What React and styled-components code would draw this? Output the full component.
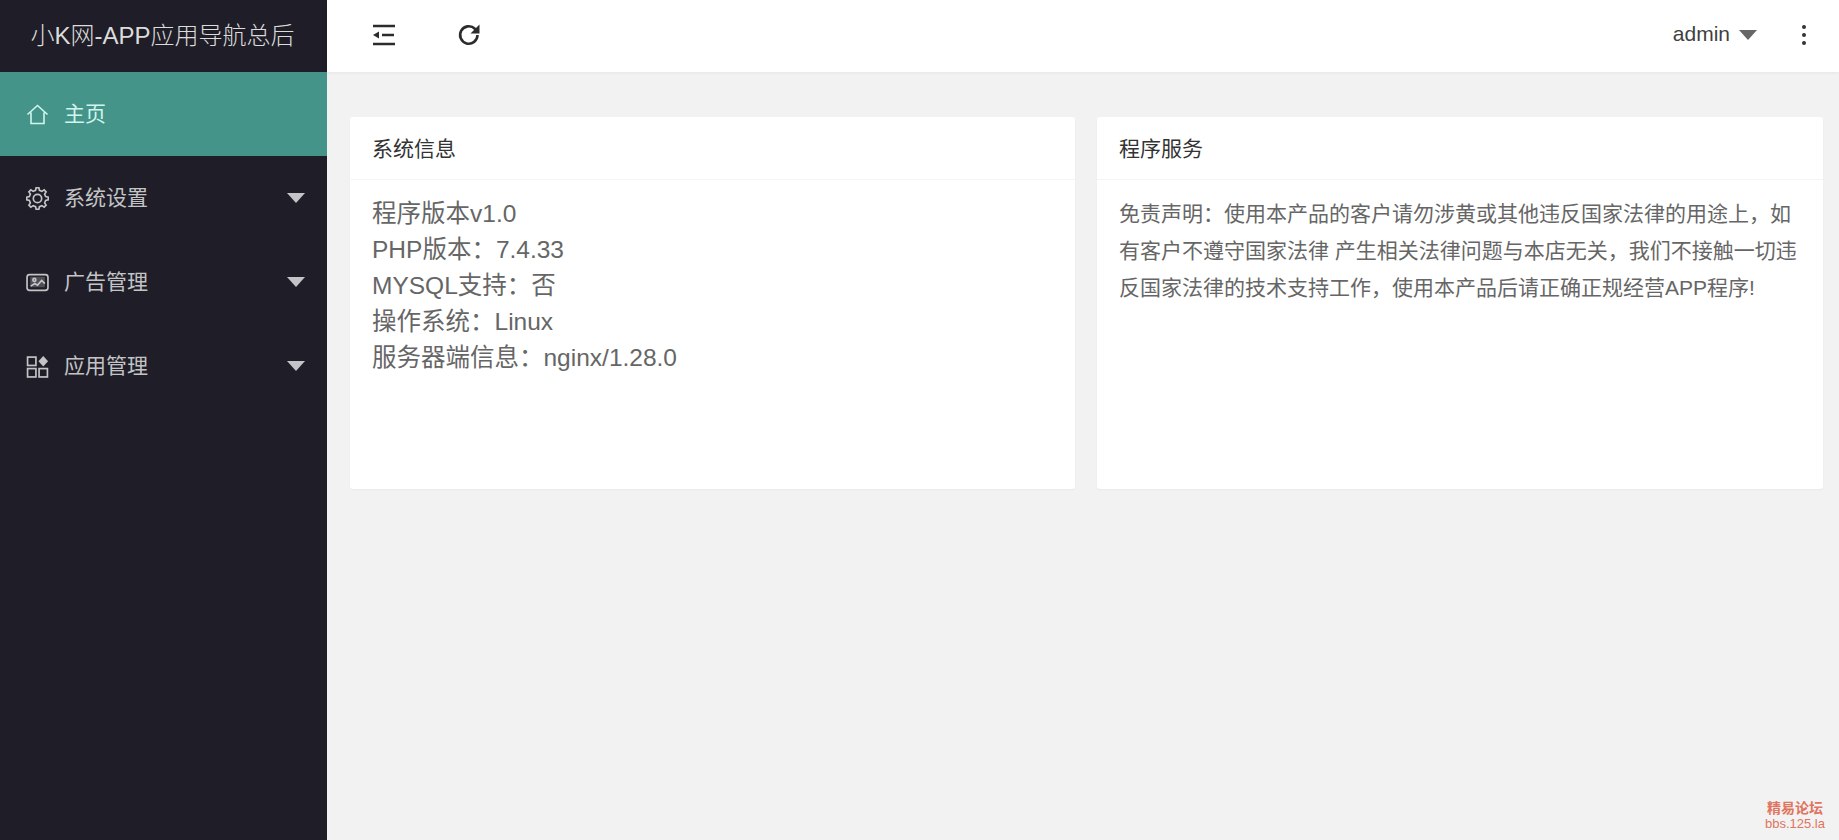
import React from "react";
import styled, { createGlobalStyle } from "styled-components";

const Global = createGlobalStyle`
  html, body, #root { margin: 0; padding: 0; height: 100%; }
  body { font-family: "Liberation Sans", "Noto Sans CJK SC", sans-serif; background: #f2f2f2; overflow: hidden; }
  * { box-sizing: border-box; }
`;

const Layout = styled.div`
  display: flex;
  width: 1839px;
  height: 840px;
  position: relative;
`;
const Sidebar = styled.aside`
  width: 327px;
  flex: none;
  background: #1f1e28;
  display: flex;
  flex-direction: column;
`;
const Brand = styled.div`
  height: 72px;
  display: flex;
  align-items: center;
  justify-content: center;
  color: #dcdcdc;
  font-size: 24px;
  font-weight: 300;
  padding: 0 2px 5px 0;
`;
const MenuItem = styled.div`
  height: 84px;
  display: flex;
  align-items: center;
  padding: 0 22px 0 26px;
  gap: 15px;
  font-size: 21px;
  color: ${p => (p.$active ? "#d0f5ec" : "#c4c4c6")};
  background: ${p => (p.$active ? "#45948a" : "transparent")};
`;
const MenuIcon = styled.svg`
  width: 23px;
  height: 23px;
  flex: none;
  fill: none;
  stroke: currentColor;
  stroke-width: 1.6;
`;
const MenuLabel = styled.span`
  flex: 1;
  padding-bottom: 5px;
`;
const Caret = styled.span`
  width: 0;
  height: 0;
  border-left: ${p => p.$size}px solid transparent;
  border-right: ${p => p.$size}px solid transparent;
  border-top: ${p => p.$size + 1}px solid ${p => p.$color};
`;
const Main = styled.main`
  flex: 1;
  display: flex;
  flex-direction: column;
  min-width: 0;
`;
const Topbar = styled.header`
  height: 72px;
  background: #fff;
  display: flex;
  align-items: center;
  padding: 0 33px 2px 45px;
  box-shadow: 0 1px 3px rgba(0, 0, 0, 0.05);
`;
const ToolIcon = styled.svg`
  width: 24px;
  height: 24px;
  margin-right: ${p => p.$mr || 0}px;
  fill: none;
  stroke: #2c2c2c;
  stroke-width: 2.6;
`;
const Spacer = styled.div`
  flex: 1;
`;
const User = styled.span`
  font-size: 21px;
  color: #3f3f3f;
  margin-right: 9px;
  padding-bottom: 2px;
`;
const Dots = styled.div`
  display: flex;
  flex-direction: column;
  gap: 4px;
  margin-left: 45px;
`;
const Dot = styled.i`
  width: 4px;
  height: 4px;
  border-radius: 50%;
  background: #333;
`;
const Content = styled.div`
  display: grid;
  grid-template-columns: 725px 726px;
  gap: 22px;
  padding: 45px 0 0 23px;
`;
const Card = styled.section`
  height: 372px;
  background: #fff;
  border-radius: 3px;
  box-shadow: 0 1px 2px rgba(0, 0, 0, 0.04);
`;
const CardHead = styled.div`
  height: 63px;
  padding: 0 22px 2px;
  display: flex;
  align-items: center;
  font-size: 21px;
  color: #333;
  border-bottom: 1px solid #f6f6f6;
`;
const InfoBody = styled.div`
  padding: 16px 22px;
  font-size: 24.5px;
  line-height: 36px;
  color: #666;
`;
const NoteBody = styled.div`
  padding: 15px 22px;
  font-size: 21px;
  line-height: 37px;
  color: #666;
`;
const Watermark = styled.div`
  position: absolute;
  right: 14px;
  bottom: 9px;
  text-align: center;
  color: #e0745e;
  font-size: 13px;
  line-height: 15px;
`;
const WmTitle = styled.div`
  font-size: 14px;
  font-weight: 700;
`;

// 8-tooth cog outline, centred in a 22 unit box
const gearPath = (() => {
  const pts = [];
  const teeth = 8;
  for (let i = 0; i < teeth; i++) {
    const a = (i / teeth) * Math.PI * 2;
    const step = (Math.PI * 2) / teeth;
    [[-0.3, 8], [-0.16, 10.4], [0.16, 10.4], [0.3, 8]].forEach(([f, r]) => {
      const t = a + f * step;
      pts.push(`${(11 + r * Math.cos(t)).toFixed(2)} ${(11 + r * Math.sin(t)).toFixed(2)}`);
    });
  }
  return `M${pts.join("L")}Z`;
})();

const items = [
  { label: "系统设置", icon: (
    <g>
      <circle cx="11" cy="11" r="4" />
      <path d={gearPath} />
    </g>
  ) },
  { label: "广告管理", icon: (
    <g>
      <rect x="1" y="3.5" width="20" height="15" rx="2.5" />
      <rect x="4" y="5.5" width="14" height="10" fill="currentColor" fillOpacity=".3" stroke="none" />
      <circle cx="8" cy="8.5" r="1.4" />
      <path d="M4.5 14.5l4-2.5 2.5 1.5 4-4.5 3 3" />
    </g>
  ) },
  { label: "应用管理", icon: (
    <g>
      <rect x="1.5" y="2" width="8" height="8" />
      <rect x="1.5" y="13" width="8" height="8" />
      <rect x="12.5" y="13" width="8" height="8" />
      <path d="M16.5 1l4.6 5-4.6 5-4.6-5z" fill="currentColor" stroke="none" />
    </g>
  ) },
];

export default function App() {
  return (
    <Layout>
      <Global />
      <Sidebar>
        <Brand>小K网-APP应用导航总后</Brand>
        <MenuItem $active>
          <MenuIcon viewBox="0 0 23 23"><path d="M1.5 11.5L11.5 2.5l10 9M5 9.5V20.5h13V9.5" /></MenuIcon>
          <MenuLabel>主页</MenuLabel>
        </MenuItem>
        {items.map(it => (
          <MenuItem key={it.label}>
            <MenuIcon viewBox="0 0 22 22">{it.icon}</MenuIcon>
            <MenuLabel>{it.label}</MenuLabel>
            <Caret $size={9} $color="#c4c4c8" />
          </MenuItem>
        ))}
      </Sidebar>
      <Main>
        <Topbar>
          <ToolIcon $mr={61} viewBox="0 0 24 24">
            <path d="M1 3h22M1 21h22M10 12h12" />
            <path d="M1 12l6-3.5v7z" fill="#2c2c2c" stroke="none" />
          </ToolIcon>
          <ToolIcon viewBox="0 0 24 24">
            <path d="M20.5 12a8.7 8.7 0 1 1-2.6-6.2L21 8.5" />
            <path d="M22.5 1.5v9h-9z" fill="#2c2c2c" stroke="none" />
          </ToolIcon>
          <Spacer />
          <User>admin</User>
          <Caret $size={9} $color="#666" />
          <Dots><Dot /><Dot /><Dot /></Dots>
        </Topbar>
        <Content>
          <Card>
            <CardHead>系统信息</CardHead>
            <InfoBody>
              <div>程序版本v1.0</div>
              <div>PHP版本：7.4.33</div>
              <div>MYSQL支持：否</div>
              <div>操作系统：Linux</div>
              <div>服务器端信息：nginx/1.28.0</div>
            </InfoBody>
          </Card>
          <Card>
            <CardHead>程序服务</CardHead>
            <NoteBody>免责声明：使用本产品的客户请勿涉黄或其他违反国家法律的用途上，如有客户不遵守国家法律 产生相关法律问题与本店无关，我们不接触一切违反国家法律的技术支持工作，使用本产品后请正确正规经营APP程序!</NoteBody>
          </Card>
        </Content>
      </Main>
      <Watermark>
        <WmTitle>精易论坛</WmTitle>
        <div>bbs.125.la</div>
      </Watermark>
    </Layout>
  );
}
